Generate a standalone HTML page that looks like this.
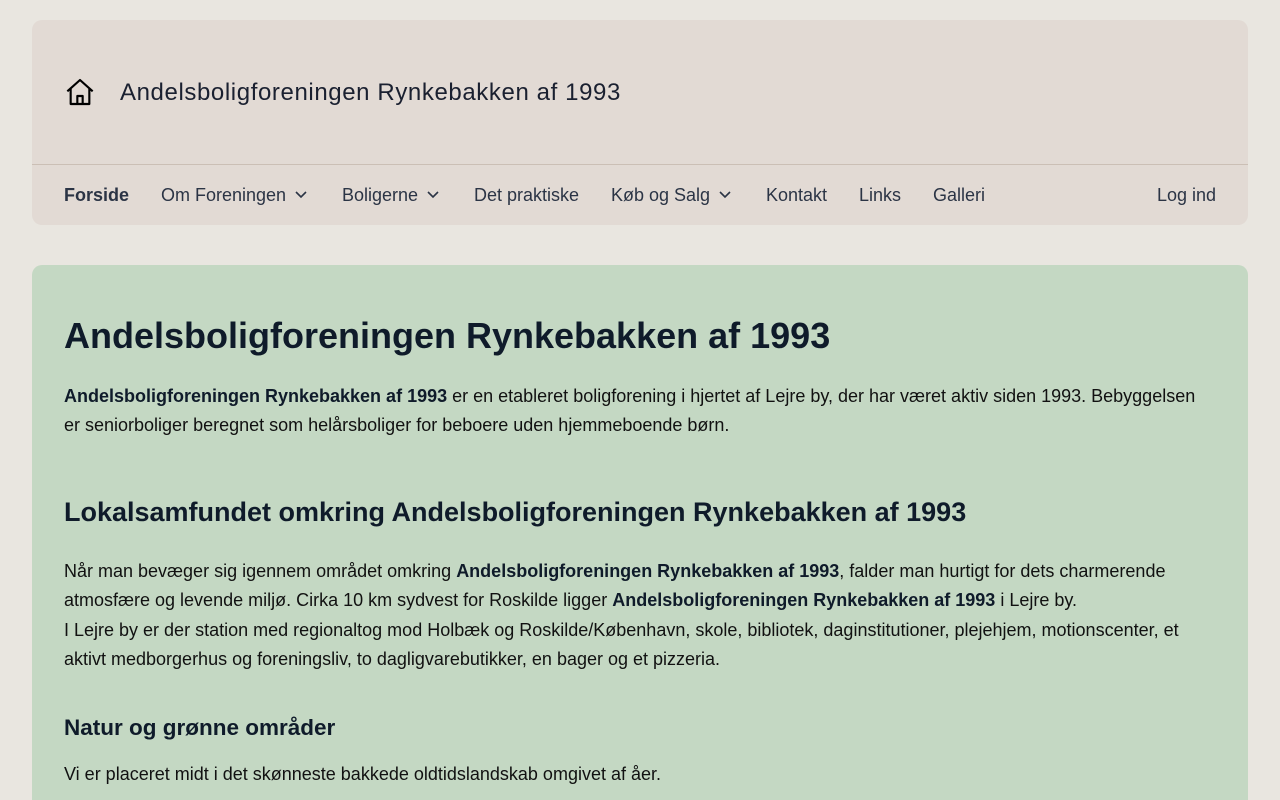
<!DOCTYPE html>
<html><head><meta charset="utf-8"><style>
*{box-sizing:border-box;margin:0;padding:0}
html,body{width:1280px;height:800px;overflow:hidden}
body{background:#e9e6e0;font-family:"Liberation Sans",sans-serif;color:#0f1b2a;position:relative}
.hdr{position:absolute;left:32px;top:20px;width:1216px;height:205px;background:#e2dad4;border-radius:10px}
.top{height:145px;border-bottom:1px solid #cbbfb5;position:relative}
.top svg{position:absolute;left:32px;top:56px}
.title{position:absolute;left:88px;top:59px;font-size:24px;letter-spacing:0.6px;color:#1a2030}
.nav{position:absolute;top:145px;left:0;height:60px;width:100%;font-size:18px;color:#2b3445}
.nav span{position:absolute;top:20px}
.nav svg{margin-left:6px;vertical-align:middle;position:relative;top:-2px}
.main{position:absolute;left:32px;top:265px;width:1216px;height:535px;background:#c4d8c3;border-radius:10px 10px 0 0;padding:0 32px}
h1{position:absolute;top:50px;font-size:36px;font-weight:bold;color:#0f1b2a}
h2{position:absolute;top:232px;font-size:27px;font-weight:bold}
h3{position:absolute;top:450px;font-size:22.5px;font-weight:bold}
p{position:absolute;left:32px;right:40px;font-size:18px;line-height:29.3px;color:#111}
b{color:#0f1b2a}
</style></head><body>
<div class="hdr">
<div class="top">
<svg width="32" height="32" viewBox="0 0 24 24" fill="none" stroke="#000" stroke-width="1.6" stroke-linejoin="round"><path d="M2.5 11.5 L12 3 L21.5 11.5 M5 9.5 V21 H19 V9.5 M10 21 V15 H14 V21"/></svg>
<div class="title">Andelsboligforeningen Rynkebakken af 1993</div>
</div>
<div class="nav">
<span style="left:32px;font-weight:bold">Forside</span>
<span style="left:129px">Om Foreningen<svg width="18" height="18" viewBox="0 0 18 18"><path d="M4 7 L9 12 L14 7" fill="none" stroke="#2b3445" stroke-width="1.6"/></svg></span>
<span style="left:310px">Boligerne<svg width="18" height="18" viewBox="0 0 18 18"><path d="M4 7 L9 12 L14 7" fill="none" stroke="#2b3445" stroke-width="1.6"/></svg></span>
<span style="left:442px">Det praktiske</span>
<span style="left:579px">Køb og Salg<svg width="18" height="18" viewBox="0 0 18 18"><path d="M4 7 L9 12 L14 7" fill="none" stroke="#2b3445" stroke-width="1.6"/></svg></span>
<span style="left:734px">Kontakt</span>
<span style="left:827px">Links</span>
<span style="left:901px">Galleri</span>
<span style="left:1125px">Log ind</span>
</div>
</div>
<div class="main">
<h1>Andelsboligforeningen Rynkebakken af 1993</h1>
<p style="top:117px"><b>Andelsboligforeningen Rynkebakken af 1993</b> er en etableret boligforening i hjertet af Lejre by, der har været aktiv siden 1993. Bebyggelsen er seniorboliger beregnet som helårsboliger for beboere uden hjemmeboende børn.</p>
<h2>Lokalsamfundet omkring Andelsboligforeningen Rynkebakken af 1993</h2>
<p style="top:292px">Når man bevæger sig igennem området omkring <b>Andelsboligforeningen Rynkebakken af 1993</b>, falder man hurtigt for dets charmerende atmosfære og levende miljø. Cirka 10 km sydvest for Roskilde ligger <b>Andelsboligforeningen Rynkebakken af 1993</b> i Lejre by.<br>I Lejre by er der station med regionaltog mod Holbæk og Roskilde/København, skole, bibliotek, daginstitutioner, plejehjem, motionscenter, et aktivt medborgerhus og foreningsliv, to dagligvarebutikker, en bager og et pizzeria.</p>
<h3>Natur og grønne områder</h3>
<p style="top:495px">Vi er placeret midt i det skønneste bakkede oldtidslandskab omgivet af åer.</p>
</div>
</body></html>
